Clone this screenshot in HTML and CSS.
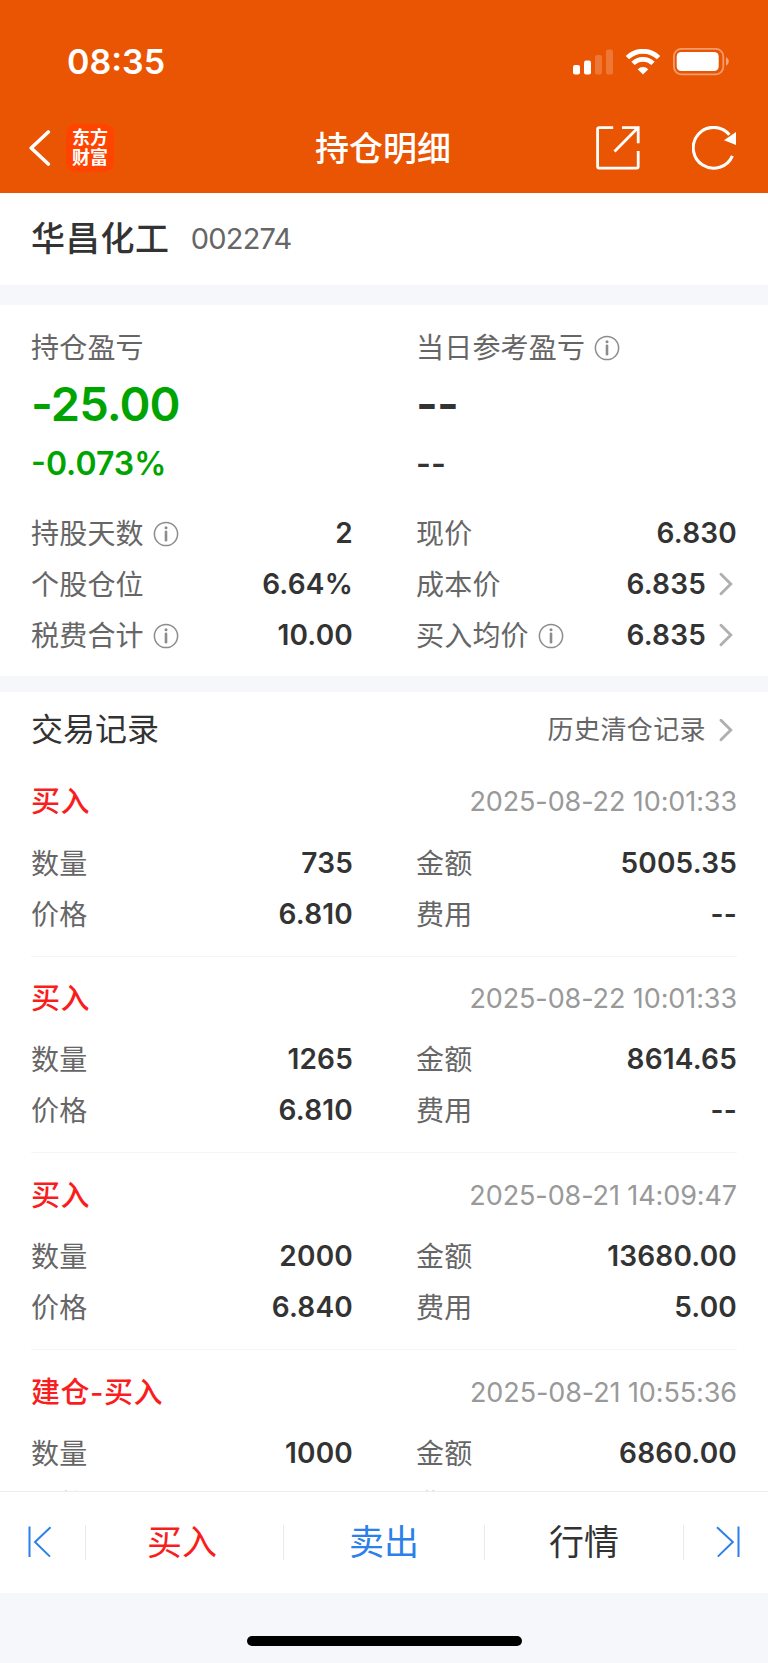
FILE: index.html
```
<!DOCTYPE html>
<html lang="zh-CN">
<head>
    <meta charset="UTF-8">
    <meta name="viewport" content="width=device-width, initial-scale=1.0">
    <title>持仓明细</title>
    <link rel="stylesheet" href="styles.css">
</head>
<body>
    <!-- Icons used more than once -->
    <svg class="defs" width="0" height="0">
        <symbol id="info" viewBox="0 0 26 26">
            <circle cx="13" cy="13" r="11.6" fill="none" stroke="#8c8c8c" stroke-width="1.5"/>
            <circle cx="13" cy="6.8" r="1.5" fill="#8c8c8c"/>
            <path d="M13 10.7V19.3" stroke="#8c8c8c" stroke-width="2.6" stroke-linecap="round"/>
        </symbol>
        <symbol id="arrow" viewBox="0 0 14 24">
            <path d="M2 2.2L11.8 12L2 21.8" fill="none" stroke="#b0b0b0" stroke-width="2.9" stroke-linecap="round" stroke-linejoin="miter"/>
        </symbol>
    </svg>

    <div class="app">
        <header class="header">
            <div class="status">
                <span class="time">08:35</span>
                <div class="status-icons">
                    <svg class="signal" width="40" height="26" viewBox="0 0 40 26" fill="#fff">
                        <rect x="0" y="16" width="7" height="9.5" rx="2"/>
                        <rect x="11" y="11.5" width="7" height="14" rx="2"/>
                        <rect x="22" y="6" width="7" height="19.5" rx="2" opacity=".2"/>
                        <rect x="33" y="0.5" width="7" height="25" rx="2" opacity=".2"/>
                    </svg>
                    <svg class="wifi" width="36" height="26" viewBox="0 0 36 26" fill="none" stroke="#fff" stroke-width="4.8">
                        <path d="M2.4 8.6A22.3 22.3 0 0 1 33.6 8.6"/>
                        <path d="M8 14.4A14.2 14.2 0 0 1 28 14.4"/>
                        <path d="M18 25.4L12.7 20.2A7.6 7.6 0 0 1 23.3 20.2Z" fill="#fff" stroke="none"/>
                    </svg>
                    <svg class="battery" width="57" height="28" viewBox="0 0 57 28">
                        <rect x="0.9" y="0.9" width="49.4" height="25.4" rx="7.5" fill="none" stroke="#fff" stroke-width="1.8" opacity=".42"/>
                        <rect x="3.7" y="4" width="42" height="19" rx="4.5" fill="#fff"/>
                        <path d="M53 9.2Q55.8 10.4 55.8 13.5T53 17.8Z" fill="#fff" opacity=".45"/>
                    </svg>
                </div>
            </div>
            <div class="nav">
                <div class="nav-left">
                    <svg class="back" width="22" height="36" viewBox="0 0 22 36">
                        <path d="M19.3 2L2.2 18L19.3 34" fill="none" stroke="#fff" stroke-width="3.6" stroke-linecap="round" stroke-linejoin="round"/>
                    </svg>
                    <div class="logo"><span>东方</span><span>财富</span></div>
                </div>
                <h1 class="title">持仓明细</h1>
                <div class="nav-right">
                    <svg class="share" width="44" height="44" viewBox="0 0 44 44" fill="none" stroke="#fff" stroke-width="2.8">
                        <path d="M17.2 1.6H3.2Q1.6 1.6 1.6 3.2V40.6Q1.6 42.2 3.2 42.2H40.6Q42.2 42.2 42.2 40.6V25"/>
                        <path d="M26 1.6H42.2V17.2M42.2 1.6L18.5 25.5"/>
                    </svg>
                    <svg class="refresh" width="44" height="44" viewBox="0 0 44 44">
                        <path d="M40.4 29.8A20.4 20.4 0 1 1 37.4 8.8" fill="none" stroke="#fff" stroke-width="3.1"/>
                        <path d="M44 6V19L32 14.2Z" fill="#fff"/>
                    </svg>
                </div>
            </div>
        </header>

        <section class="stock">
            <h2 class="stock-name">华昌化工</h2>
            <span class="stock-code">002274</span>
        </section>

        <section class="summary">
            <div class="profit">
                <div class="profit-col">
                    <p class="label">持仓盈亏</p>
                    <p class="big green">-25.00</p>
                    <p class="percent green">-0.073%</p>
                </div>
                <div class="profit-col">
                    <p class="label">当日参考盈亏<svg class="info"><use href="#info"/></svg></p>
                    <p class="big">--</p>
                    <p class="percent">--</p>
                </div>
            </div>
            <div class="grid">
                <div class="cell"><span class="label">持股天数<svg class="info"><use href="#info"/></svg></span><b>2</b></div>
                <div class="cell"><span class="label">现价</span><b>6.830</b></div>
                <div class="cell"><span class="label">个股仓位</span><b>6.64%</b></div>
                <div class="cell"><span class="label">成本价</span><b>6.835</b><svg class="arrow"><use href="#arrow"/></svg></div>
                <div class="cell"><span class="label">税费合计<svg class="info"><use href="#info"/></svg></span><b>10.00</b></div>
                <div class="cell"><span class="label">买入均价<svg class="info"><use href="#info"/></svg></span><b>6.835</b><svg class="arrow"><use href="#arrow"/></svg></div>
            </div>
        </section>

        <section class="records">
            <div class="records-head">
                <h2 class="records-title">交易记录</h2>
                <a class="history">历史清仓记录<svg class="arrow"><use href="#arrow"/></svg></a>
            </div>

            <article class="record">
                <div class="record-head"><h3>买入</h3><time>2025-08-22 10:01:33</time></div>
                <div class="grid">
                    <div class="cell"><span class="label">数量</span><b>735</b></div>
                    <div class="cell"><span class="label">金额</span><b>5005.35</b></div>
                    <div class="cell"><span class="label">价格</span><b>6.810</b></div>
                    <div class="cell"><span class="label">费用</span><b>--</b></div>
                </div>
            </article>
            <article class="record">
                <div class="record-head"><h3>买入</h3><time>2025-08-22 10:01:33</time></div>
                <div class="grid">
                    <div class="cell"><span class="label">数量</span><b>1265</b></div>
                    <div class="cell"><span class="label">金额</span><b>8614.65</b></div>
                    <div class="cell"><span class="label">价格</span><b>6.810</b></div>
                    <div class="cell"><span class="label">费用</span><b>--</b></div>
                </div>
            </article>
            <article class="record">
                <div class="record-head"><h3>买入</h3><time>2025-08-21 14:09:47</time></div>
                <div class="grid">
                    <div class="cell"><span class="label">数量</span><b>2000</b></div>
                    <div class="cell"><span class="label">金额</span><b>13680.00</b></div>
                    <div class="cell"><span class="label">价格</span><b>6.840</b></div>
                    <div class="cell"><span class="label">费用</span><b>5.00</b></div>
                </div>
            </article>
            <article class="record">
                <div class="record-head"><h3>建仓-买入</h3><time>2025-08-21 10:55:36</time></div>
                <div class="grid">
                    <div class="cell"><span class="label">数量</span><b>1000</b></div>
                    <div class="cell"><span class="label">金额</span><b>6860.00</b></div>
                    <div class="cell"><span class="label">价格</span></div>
                    <div class="cell"><span class="label">费用</span></div>
                </div>
            </article>
        </section>

        <nav class="tabs">
            <a class="tab-edge prev">
                <svg width="24" height="32" viewBox="0 0 24 32" fill="none" stroke="#2b80ea" stroke-width="2">
                    <path d="M1.5 0.5V31M22.5 1.2L7 16L22 30.6"/>
                </svg>
            </a>
            <a class="tab buy">买入</a>
            <a class="tab sell">卖出</a>
            <a class="tab">行情</a>
            <a class="tab-edge next">
                <svg width="24" height="32" viewBox="0 0 24 32" fill="none" stroke="#2b80ea" stroke-width="2">
                    <path d="M22.5 0.5V31M1 1.2L16.8 16L1.8 30.6"/>
                </svg>
            </a>
        </nav>

        <footer class="home"><div class="home-bar"></div></footer>
    </div>
</body>
</html>
```
FILE: styles.css
```
* {
    box-sizing: border-box;
    margin: 0;
    padding: 0;
}

body {
    background-color: #f6f7fa;
    color: #333;
    font-family: Inter, "Noto Sans CJK SC", sans-serif;
    line-height: 1;
}

.defs {
    display: block;
}

.app {
    width: 768px;
    height: 1663px;
    display: flex;
    flex-direction: column;
    overflow: hidden;
}

/* Header */
.header {
    height: 192.6px;
    flex: none;
    background-color: #ea5504;
    color: #fff;
}

.status {
    height: 123px;
    display: flex;
    align-items: center;
    justify-content: space-between;
    padding: 0 38px 0 67px;
}

.time {
    font-size: 34px;
    font-weight: 600;
}

.status-icons {
    display: flex;
    align-items: center;
}

.wifi {
    margin: 0 12px 0 12px;
}

.nav {
    height: 50px;
    display: grid;
    grid-template-columns: 1fr auto 1fr;
    align-items: center;
    padding: 0 32px 0 29px;
}

.nav-left {
    display: flex;
    align-items: center;
    gap: 15px;
}

.logo {
    width: 48px;
    height: 48px;
    border-radius: 9px;
    background-color: #ff4400;
    display: flex;
    flex-direction: column;
    align-items: center;
    justify-content: center;
    font-size: 18px;
    font-weight: 700;
    line-height: 20px;
}

.title {
    padding: 2px 0 0 1px;
    font-size: 34px;
    font-weight: 500;
}

.nav-right {
    display: flex;
    justify-content: flex-end;
    gap: 52px;
}

/* Stock name */
.stock {
    height: 92.4px;
    flex: none;
    display: flex;
    align-items: center;
    padding: 0 31px;
    background-color: #fff;
}

.stock-name {
    font-size: 34px;
    font-weight: 500;
    letter-spacing: .7px;
}

.stock-code {
    margin-left: 21px;
    font-size: 29px;
    letter-spacing: -.8px;
    color: #666;
}

/* Position summary */
.summary {
    height: 371px;
    flex: none;
    margin-top: 20px;
    padding: 23px 31px 0 31px;
    background-color: #fff;
}

.profit {
    display: grid;
    grid-template-columns: 322px 321px;
    column-gap: 63px;
    height: 179px;
}

.label {
    display: flex;
    align-items: center;
    padding-top: 2px;
    font-size: 28px;
    letter-spacing: .2px;
    color: #666;
}

.profit .label {
    height: 38px;
}

.info {
    width: 26px;
    height: 26px;
    margin-left: 9px;
}

.big {
    height: 75px;
    line-height: 75px;
    font-size: 47px;
    font-weight: 600;
    letter-spacing: -.9px;
}

.percent {
    height: 46px;
    line-height: 46px;
    font-size: 32px;
    font-weight: 600;
}

.green {
    color: #00a400;
}

.grid {
    display: grid;
    grid-template-columns: 322px 321px;
    grid-auto-rows: 51.2px;
    column-gap: 63px;
}

.cell {
    display: flex;
    align-items: center;
}

.cell b {
    margin-left: auto;
    font-size: 28px;
    font-weight: 600;
    letter-spacing: .2px;
}

.arrow {
    width: 14px;
    height: 24px;
    margin: 0 4px 0 13px;
}

/* Trade records */
.records {
    height: 799px;
    flex: none;
    margin-top: 16px;
    padding: 0 31px 0 31px;
    background-color: #fff;
    overflow: hidden;
}

.records-head {
    height: 68px;
    padding-top: 8px;
    display: flex;
    align-items: center;
    justify-content: space-between;
}

.records-title {
    font-size: 32px;
    font-weight: 400;
}

.history {
    display: flex;
    align-items: center;
    font-size: 26px;
    letter-spacing: .4px;
    color: #666;
}

.record {
    height: 196.7px;
    padding-top: 11px;
    border-bottom: 1px solid #f5f5f6;
}

.record-head {
    height: 62px;
    margin-bottom: 4px;
    display: flex;
    align-items: center;
    justify-content: space-between;
}

.record-head h3 {
    font-size: 29px;
    font-weight: 500;
    letter-spacing: .5px;
    color: #f91d1d;
}

.record-head time {
    font-size: 27px;
    letter-spacing: -.1px;
    color: #999;
}

/* Bottom tabs */
.tabs {
    height: 102px;
    flex: none;
    display: flex;
    align-items: center;
    border-top: 1px solid #eeeeef;
    background-color: #fff;
}

.tab,
.tab-edge {
    height: 35px;
    display: flex;
    align-items: center;
    justify-content: center;
}

.tab {
    width: 199px;
    border-right: 1px solid #e9eaec;
    font-size: 35px;
}

.tab-edge {
    width: 84px;
}

.prev {
    width: 86px;
    border-right: 1px solid #e9eaec;
    padding-right: 6px;
}

.next {
    padding-left: 3px;
}

.buy {
    width: 198px;
    padding-right: 5px;
    color: #f91d1d;
}

.sell {
    width: 201px;
    color: #2b80ea;
}

/* Home indicator */
.home {
    flex: 1;
    padding-top: 43px;
}

.home-bar {
    width: 275px;
    height: 10px;
    margin: 0 auto;
    border-radius: 5px;
    background-color: #000;
}
```
